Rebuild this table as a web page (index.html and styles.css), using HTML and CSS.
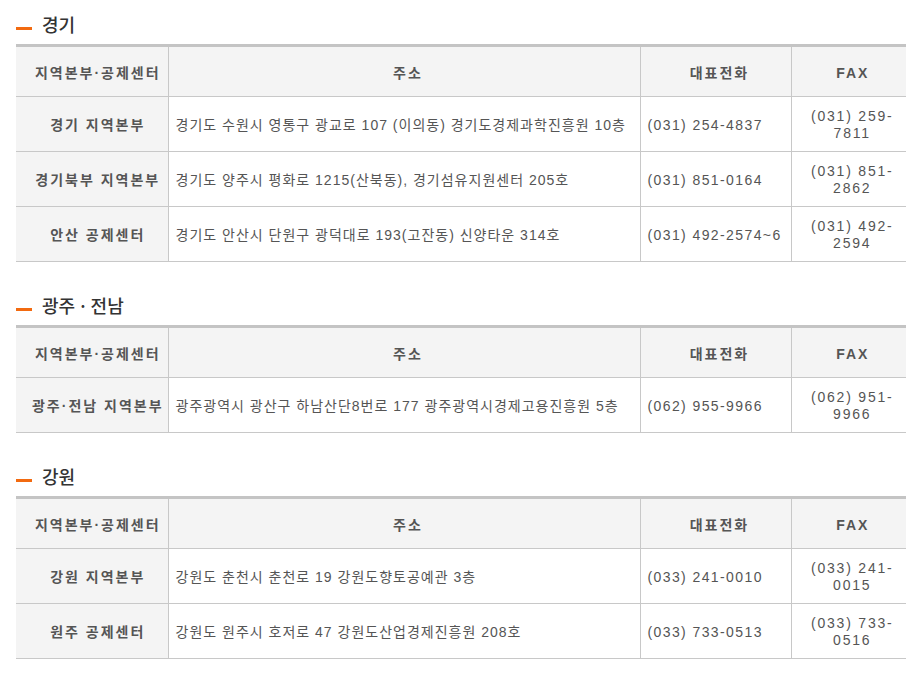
FILE: index.html
```html
<!DOCTYPE html>
<html lang="ko">
<head>
<meta charset="utf-8">
<title>지역본부·공제센터</title>
<link rel="stylesheet" href="styles.css">
</head>
<body>
<div class="page">
  <section class="region">
    <h2 class="region-title"><span class="dash"></span>경기</h2>
    <table class="office-table">
      <colgroup><col class="c1"><col class="c2"><col class="c3"><col class="c4"></colgroup>
      <thead>
        <tr><th>지역본부·공제센터</th><th>주소</th><th>대표전화</th><th>FAX</th></tr>
      </thead>
      <tbody>
        <tr><th>경기 지역본부</th><td>경기도 수원시 영통구 광교로 107 (이의동) 경기도경제과학진흥원 10층</td><td class="num">(031) 254-4837</td><td class="num fax">(031) 259-<br>7811</td></tr>
        <tr><th>경기북부 지역본부</th><td>경기도 양주시 평화로 1215(산북동), 경기섬유지원센터 205호</td><td class="num">(031) 851-0164</td><td class="num fax">(031) 851-<br>2862</td></tr>
        <tr><th>안산 공제센터</th><td>경기도 안산시 단원구 광덕대로 193(고잔동) 신양타운 314호</td><td class="num">(031) 492-2574~6</td><td class="num fax">(031) 492-<br>2594</td></tr>
      </tbody>
    </table>
  </section>

  <section class="region">
    <h2 class="region-title"><span class="dash"></span>광주 · 전남</h2>
    <table class="office-table">
      <colgroup><col class="c1"><col class="c2"><col class="c3"><col class="c4"></colgroup>
      <thead>
        <tr><th>지역본부·공제센터</th><th>주소</th><th>대표전화</th><th>FAX</th></tr>
      </thead>
      <tbody>
        <tr><th>광주·전남 지역본부</th><td>광주광역시 광산구 하남산단8번로 177 광주광역시경제고용진흥원 5층</td><td class="num">(062) 955-9966</td><td class="num fax">(062) 951-<br>9966</td></tr>
      </tbody>
    </table>
  </section>

  <section class="region">
    <h2 class="region-title"><span class="dash"></span>강원</h2>
    <table class="office-table">
      <colgroup><col class="c1"><col class="c2"><col class="c3"><col class="c4"></colgroup>
      <thead>
        <tr><th>지역본부·공제센터</th><th>주소</th><th>대표전화</th><th>FAX</th></tr>
      </thead>
      <tbody>
        <tr><th>강원 지역본부</th><td>강원도 춘천시 춘천로 19 강원도향토공예관 3층</td><td class="num">(033) 241-0010</td><td class="num fax">(033) 241-<br>0015</td></tr>
        <tr><th>원주 공제센터</th><td>강원도 원주시 호저로 47 강원도산업경제진흥원 208호</td><td class="num">(033) 733-0513</td><td class="num fax">(033) 733-<br>0516</td></tr>
      </tbody>
    </table>
  </section>
</div>
</body>
</html>
```

FILE: styles.css
```css
html, body {
  margin: 0;
  padding: 0;
  background: #fff;
}
body {
  font-family: "Liberation Sans", "Noto Sans CJK KR", sans-serif;
  color: #555;
  font-size: 14px;
}
.page {
  padding: 0 16px;
}
.region + .region {
  margin-top: 19px;
}
.region-title {
  display: flex;
  align-items: center;
  margin: 0;
  padding-top: 12px;
  height: 24px;
  margin-bottom: 8px;
  font-family: "Noto Sans CJK KR", sans-serif;
  font-size: 18px;
  font-weight: 500;
  line-height: 24px;
  color: #333;
}
.dash {
  display: inline-block;
  width: 16px;
  height: 3px;
  background: #f26a10;
  margin-right: 10px;
  margin-top: 8px;
}
.office-table {
  width: 100%;
  table-layout: fixed;
  border-collapse: collapse;
  border-top: 3px solid #c4c4c4;
}
.c1 { width: 152px; }
.c2 { width: 472px; }
.c3 { width: 151px; }
.c4 { width: 115px; }
.office-table th,
.office-table td {
  border-bottom: 1px solid #c8c8c8;
  border-left: 1px solid #c8c8c8;
  padding: 2px 0 0 8px;
  line-height: 17px;
  vertical-align: middle;
}
.office-table th:first-child {
  border-left: 0;
  padding-left: 12px;
}
.office-table thead th {
  height: 46px;
  padding-top: 3px;
  background: #f4f4f4;
  font-weight: 700;
  color: #555;
  text-align: center;
  letter-spacing: 2px;
}
.office-table tbody tr {
  height: 55px;
}
.office-table tbody th {
  background: #f4f4f4;
  font-weight: 700;
  color: #555;
  text-align: center;
  letter-spacing: 2px;
  white-space: nowrap;
}
.office-table tbody td {
  color: #555;
  text-align: left;
  padding-left: 7px;
  letter-spacing: 1px;
}
.office-table td.num {
  letter-spacing: 1.4px;
  white-space: nowrap;
}
.office-table td.fax {
  text-align: center;
  letter-spacing: 1.8px;
}
```
